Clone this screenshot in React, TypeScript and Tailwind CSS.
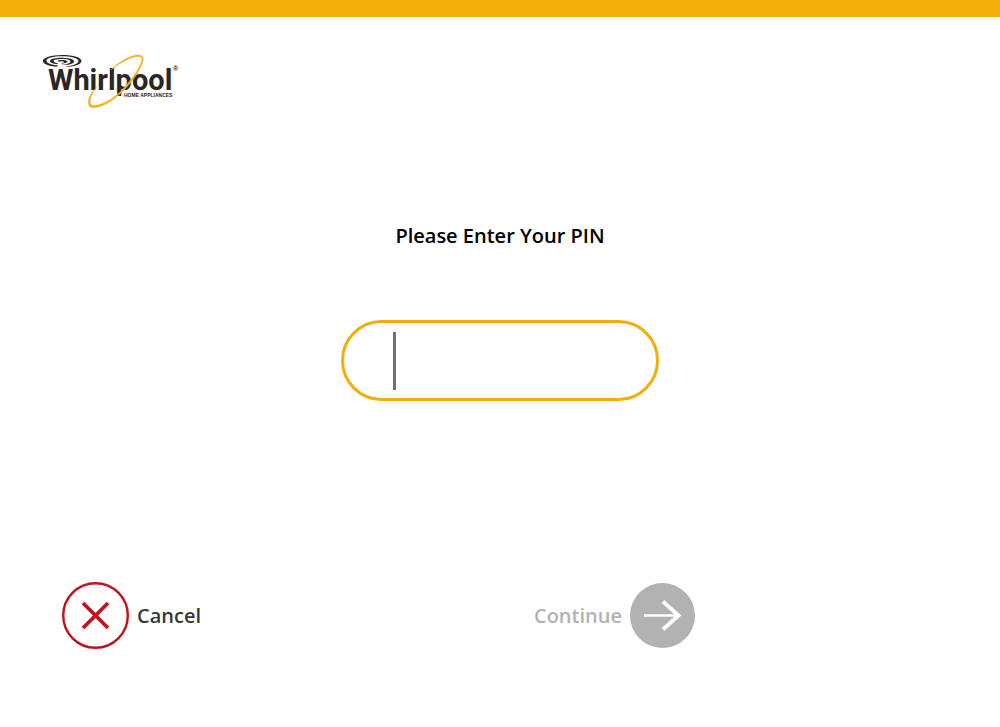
import { useState } from "react";

function Logo() {
  return (
    <svg viewBox="0 0 140 56" className="block h-14 w-[140px]" role="img" aria-label="Whirlpool Home Appliances">
      <g fill="#2b2624">
        <path
          fillRule="evenodd"
          d="M2.800 8C2.800 4.800 11 2 22 2C34 2 41.500 4.600 41.500 8C41.500 11.600 33 13.800 25 13.800C33 12.600 38.500 11 38.500 8C38.500 5 31 3.300 22 3.300C13 3.300 6.500 5 6.500 7.800C6.500 10.300 12 12 18 12.500L17 13.700C9 13 2.800 11 2.800 8Z"
        />
        <path d="M10 8C10 5.500 17 4.500 23 4.700C30 5 34.500 6.500 34 8.700C33.500 11 28 12.200 21 11.700C27 11.300 30.500 10.200 30.500 8.500C30.500 6.700 27 5.900 22.500 5.900C17 5.900 13.500 6.700 13.500 8C13.500 9.200 16 10 18 10.200L17.500 11.200C13 10.800 10 9.800 10 8Z" />
        <path d="M17.500 8C18.500 6.700 26 6.500 27.500 8.200C28 9.700 24 10.700 20 10.300C23 9.900 24.500 9.400 24 8.700C23 7.900 20 8 18.500 8.700Z" />
      </g>
      <text x="8" y="37" fontSize="29" className="fill-[#2b2624] font-['Roboto','Liberation_Sans',sans-serif] font-bold">
        Whirlpool
      </text>
      <text x="84" y="44" fontSize="5" className="fill-[#2b2624] font-['Liberation_Sans',sans-serif] font-bold">
        HOME APPLIANCES
      </text>
      <text x="133" y="18" fontSize="7" className="fill-[#2b2624] font-['Liberation_Sans',sans-serif]">
        ®
      </text>
      <path
        d="M71 17C82 5 98-1 102.500 3.500C106 8 95 27 81 40C69 51.500 54 57.500 49.500 53.500C46 49 50 40 57 34C52 40 48.500 48 51 51.800C54 54.500 68 50 79.500 39.500C93 26 104 9 101.500 4.300C97 1 83 7 71 17Z"
        fill="#efb01f"
        stroke="#efb01f"
        strokeWidth="0.4"
      />
    </svg>
  );
}

export default function App() {
  const [pin, setPin] = useState("");

  return (
    <div className="flex min-h-screen flex-col bg-white font-['Open_Sans','Noto_Sans',sans-serif] text-xl font-semibold">
      <div className="h-[17px] bg-[#f2ae0a]" />
      <header className="px-10 pt-9">
        <Logo />
      </header>
      <main className="flex flex-1 flex-col items-center pt-[111px]">
        <label htmlFor="pin" className="leading-8 text-black">
          Please Enter Your PIN
        </label>
        <div className="relative mt-17">
          <input
            id="pin"
            type="password"
            inputMode="numeric"
            value={pin}
            onChange={(e) => setPin(e.target.value)}
            className="block h-[81px] w-[318px] rounded-full border-[3px] border-[#f2ae0a] bg-white pl-14 pr-12 text-4xl text-[#333] caret-transparent outline-none"
          />
          {pin === "" && <span className="pointer-events-none absolute top-3 left-13 h-[58px] w-[3px] bg-[#707070]" />}
        </div>
      </main>
      <footer className="flex w-[69.5%] items-center justify-between pb-[78px] pl-[62px]">
        <button type="button" className="flex items-center gap-2 text-[#383838]">
          <svg viewBox="0 0 67 67" className="size-[67px]" fill="none" stroke="#c1121f" aria-hidden="true">
            <circle cx="33.500" cy="33.500" r="32.300" strokeWidth="2.400" />
            <path d="M21 21L46 46M46 21L21 46" strokeWidth="3.800" />
          </svg>
          Cancel
        </button>
        <button type="button" disabled={pin === ""} className="flex items-center gap-2 text-[#b2b2b2]">
          Continue
          <svg viewBox="0 0 65 65" className="size-[65px]" fill="none" stroke="#fff" aria-hidden="true">
            <circle cx="32.500" cy="32.500" r="32.500" fill="#b2b2b2" stroke="none" />
            <path d="M14 32.500H48" strokeWidth="2.600" />
            <path d="M33 18.500L48.500 32.500L33 46.500" strokeWidth="3.800" />
          </svg>
        </button>
      </footer>
    </div>
  );
}
